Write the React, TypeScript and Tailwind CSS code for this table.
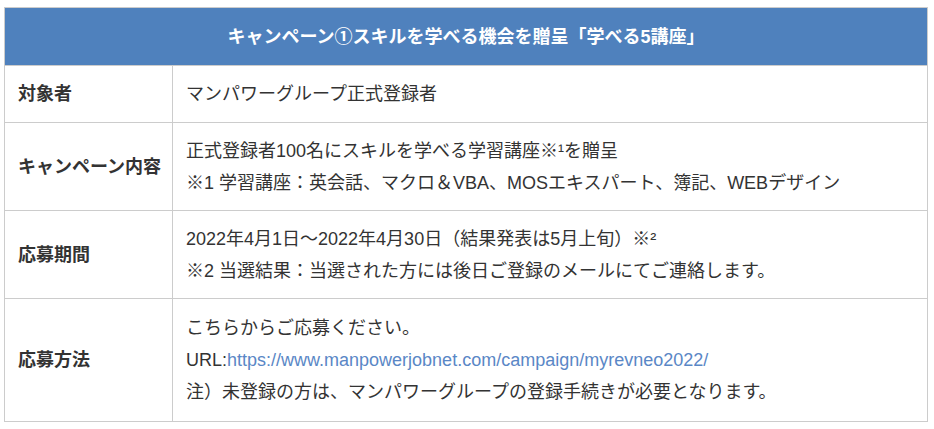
import React from "react";

const font = { fontFamily: '"Liberation Sans", "Noto Sans CJK JP", sans-serif' };

export default function App() {
  const rows: { label: string; lines: React.ReactNode[] }[] = [
    { label: "対象者", lines: ["マンパワーグループ正式登録者"] },
    {
      label: "キャンペーン内容",
      lines: [
        "正式登録者100名にスキルを学べる学習講座※¹を贈呈",
        "※1 学習講座：英会話、マクロ＆VBA、MOSエキスパート、簿記、WEBデザイン",
      ],
    },
    {
      label: "応募期間",
      lines: [
        "2022年4月1日～2022年4月30日（結果発表は5月上旬）※²",
        "※2 当選結果：当選された方には後日ご登録のメールにてご連絡します。",
      ],
    },
    {
      label: "応募方法",
      lines: [
        "こちらからご応募ください。",
        <>
          URL:
          <span className="text-[#5a87c6]">https://www.manpowerjobnet.com/campaign/myrevneo2022/</span>
        </>,
        "注）未登録の方は、マンパワーグループの登録手続きが必要となります。",
      ],
    },
  ];
  const heights = ["h-[57px]", "h-[88px]", "h-[88px]", "h-[123px]"];
  return (
    <div className="bg-white w-[934px] h-[429px] pt-[7px] pl-[4px]" style={font}>
      <table className="border-collapse w-[924px] text-[18px] text-[#333] leading-[32px]">
        <thead>
          <tr>
            <th
              colSpan={2}
              className="h-[58px] bg-[#4f81bd] border border-[#cccccc] text-white font-bold text-center"
            >
              キャンペーン①スキルを学べる機会を贈呈「学べる5講座」
            </th>
          </tr>
        </thead>
        <tbody>
          {rows.map((r, i) => (
            <tr key={i} className={heights[i]}>
              <td className="w-[168px] border border-[#cccccc] pl-[13px] font-bold align-middle">
                {r.label}
              </td>
              <td className="border border-[#cccccc] pl-[13px] align-middle">
                {r.lines.map((l, j) => (
                  <div key={j}>{l}</div>
                ))}
              </td>
            </tr>
          ))}
        </tbody>
      </table>
    </div>
  );
}
